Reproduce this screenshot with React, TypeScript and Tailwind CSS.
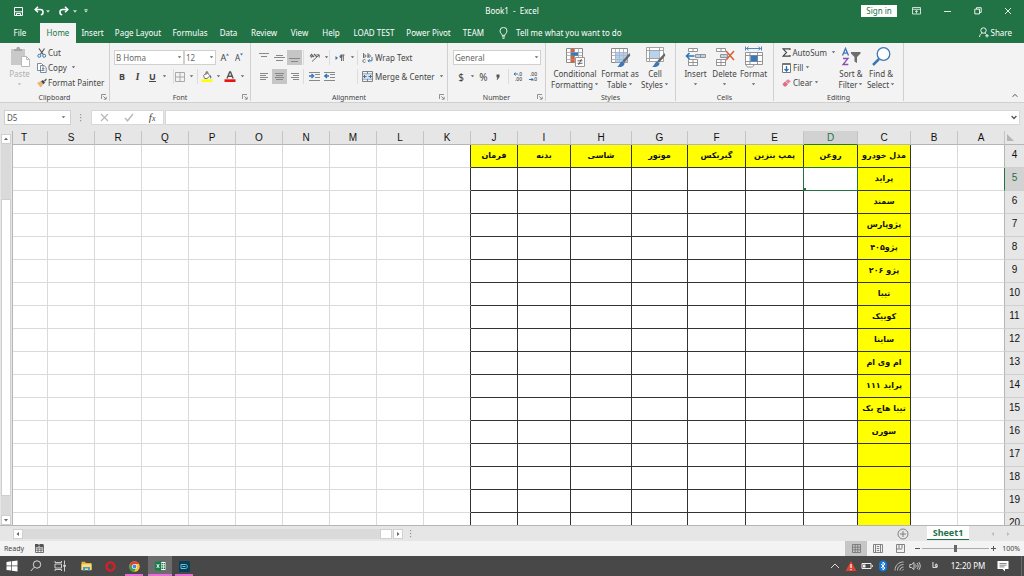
import React, { useState } from "react";

type Kids = { children?: React.ReactNode };

const Caret = () => (
  <svg width="5" height="3" viewBox="0 0 5 3" className="shrink-0">
    <path d="M0.8 0.3h3.400L2.500 2.300z" fill="#666" />
  </svg>
);

const Launcher = () => (
  <svg width="6" height="6" viewBox="0 0 6 6" fill="none" stroke="#777" strokeWidth="0.8">
    <path d="M0.5 5V0.5H5M2.3 2.3l2.6 2.6M5.2 2.8v2.4H2.8" />
  </svg>
);

function Group({ label, width, launcher, children }: Kids & { label: string; width: string; launcher?: boolean }) {
  return (
    <section aria-label={label} className={`flex shrink-0 flex-col border-r border-[#d0d0d0] ${width}`}>
      <div className="flex h-[50px] items-start">{children}</div>
      <div className="flex h-2 items-center">
        <span className="w-[14px]" />
        <span className="flex-1 text-center text-[#444] text-[7px]">{label}</span>
        <span className="flex w-[14px] justify-end pr-[2px]">
          {launcher && (
            <button aria-label={`${label} settings`} className="block">
              <Launcher />
            </button>
          )}
        </span>
      </div>
    </section>
  );
}

function Tool({ label, w, active, children }: Kids & { label: string; w: string; active?: boolean }) {
  return (
    <button
      aria-label={label}
      className={`flex h-[15px] shrink-0 items-center justify-center ${w} ${active ? "bg-[#c6c6c6]" : ""}`}
    >
      {children}
    </button>
  );
}

const Sep = () => <span className="h-[15px] w-px shrink-0 bg-[#dcdcdc]" />;

function BigTool({ lines, w, caretBelow, muted, children }: Kids & { lines: string[]; w: string; caretBelow?: boolean; muted?: boolean }) {
  return (
    <button className={`flex shrink-0 flex-col items-center ${w} ${muted ? "text-[#b0b0b0]" : "text-[#444]"}`}>
      <span className="flex h-[22px] items-center">{children}</span>
      {lines.map((l, i) => (
        <span key={l} className="flex h-[11px] items-center gap-px whitespace-nowrap leading-[11px]">
          {l}
          {!caretBelow && i === lines.length - 1 && <Caret />}
        </span>
      ))}
      {caretBelow && (
        <span className={`flex h-[11px] items-center ${muted ? "opacity-40" : ""}`}>
          <Caret />
        </span>
      )}
    </button>
  );
}

function SmallTool({ text, caret, gap, children }: Kids & { text: string; caret?: boolean; gap?: string }) {
  return (
    <button className="flex h-[15px] items-center">
      <span className="flex w-[11px] justify-start">{children}</span>
      <span className="whitespace-nowrap">{text}</span>
      {caret && (
        <span className={gap ?? "ml-1"}>
          <Caret />
        </span>
      )}
    </button>
  );
}

const Lines = ({ rows }: { rows: [number, number, number][] }) => (
  <svg width="11" height="11" viewBox="0 0 11 11" stroke="#888" strokeWidth="1">
    {rows.map(([y, a, b]) => (
      <path key={y} d={`M${a} ${y}.5H${b}`} />
    ))}
  </svg>
);

const Grid = ({ accent }: { accent?: React.ReactNode }) => (
  <svg width="22" height="22" viewBox="0 0 22 22" fill="none">
    <path d="M2.5 2.5h16v14h-16z" fill="#fff" stroke="#8a8a8a" />
    <path d="M2.5 6.5h16M2.5 9.5h16M2.5 13.5h16M6.5 2.5v14M10.5 2.5v14M14.5 2.5v14" stroke="#a5a5a5" strokeWidth="0.8" />
    {accent}
  </svg>
);

const Brush = () => (
  <>
    <path d="M20.5 7l.8 2.5-6 7-2-1.6z" fill="#666" />
    <path d="M8 21c2-.8 2.5-4.500 5.300-5.800l2.200 2c0 2.800-3 4.300-7.500 3.800z" fill="#3c78b8" />
  </>
);

const Indent = ({ dir }: { dir: "left" | "right" }) => (
  <svg width="11" height="11" viewBox="0 0 11 11" fill="none">
    <path d="M0 1.500h11M6 3.500h5M6 6.500h5M0 9.500h11" stroke="#888" strokeWidth="1" />
    {dir === "right" ? (
      <path d="M0 5h3.500M2.500 3l2.200 2-2.200 2" stroke="#2b74b8" strokeWidth="1.300" />
    ) : (
      <path d="M1.500 5H5M3 3L.8 5 3 7" stroke="#2b74b8" strokeWidth="1.300" />
    )}
  </svg>
);

const Decimals = ({ inc }: { inc?: boolean }) => (
  <svg width="11" height="11" viewBox="0 0 11 11">
    <text x={inc ? 5 : 2} y="4.800" fontSize="5" fontFamily="Open Sans" fontWeight="600" fill="#555">{inc ? ".0" : ".00"}</text>
    <text x={inc ? 2 : 5} y="10" fontSize="5" fontFamily="Open Sans" fontWeight="600" fill="#555">{inc ? ".00" : ".0"}</text>
    <path d={inc ? "M5 3H1M2.500 1.500L1 3l1.500 1.500" : "M1 8.500h4M3.500 7L5 8.500 3.500 10"} stroke="#2b74b8" fill="none" />
  </svg>
);

const tabs: [string, string][] = [
  ["File", "w-10"],
  ["Home", "w-9"],
  ["Insert", "w-[33px]"],
  ["Page Layout", "w-[58px]"],
  ["Formulas", "w-[46px]"],
  ["Data", "w-[31px]"],
  ["Review", "w-10"],
  ["View", "w-[31px]"],
  ["Help", "w-8"],
  ["LOAD TEST", "w-[54px]"],
  ["Power Pivot", "w-[55px]"],
  ["TEAM", "w-[35px]"],
];

function TitleBar() {
  return (
    <header className="grid h-[22px] shrink-0 grid-cols-[1fr_auto_1fr] items-center bg-[#217346] text-white">
      <div className="flex items-center pl-[13px]">
        <button aria-label="Save" className="w-[21px]">
          <svg width="11" height="11" viewBox="0 0 11 11" fill="none" stroke="#fff">
            <path d="M1.500 1.500h8v8h-8zM1.500 5.800h8M3.500 9.500v-2h4v2" />
          </svg>
        </button>
        <button aria-label="Undo" className="flex w-6 items-center gap-px">
          <svg width="11" height="10" viewBox="0 0 11 10" fill="none" stroke="#fff" strokeWidth="1.500">
            <path d="M4 .8L1.200 3.500 4 6.200M1.500 3.500h4.800c3.600 0 3.600 4.800.5 5.300" />
          </svg>
          <svg width="4" height="3" viewBox="0 0 5 3"><path d="M0 0h5L2.500 3z" fill="#c6ddd0" /></svg>
        </button>
        <button aria-label="Redo" className="flex w-[26px] items-center gap-1">
          <svg width="11" height="10" viewBox="0 0 11 10" fill="none" stroke="#fff" strokeWidth="1.500">
            <path d="M7 .8l2.800 2.700L7 6.200M9.500 3.500H4.700c-3.600 0-3.600 4.800-.5 5.300" />
          </svg>
          <svg width="4" height="3" viewBox="0 0 5 3"><path d="M0 0h5L2.500 3z" fill="#c6ddd0" /></svg>
        </button>
        <button aria-label="Customize toolbar">
          <svg width="4" height="4" viewBox="0 0 5 5" fill="#dcebe2"><path d="M.5 0h4v.8h-4zM.3 2h4.400L2.500 4.500z" /></svg>
        </button>
      </div>
      <h1 className="whitespace-pre">{"Book1  -  Excel"}</h1>
      <div className="flex items-center justify-end pr-3">
        <button className="h-3 w-9 bg-white text-center leading-3 text-[#217346]">Sign in</button>
        <button aria-label="Ribbon display options" className="ml-[15px]">
          <svg width="9" height="8" viewBox="0 0 9 8" fill="none" stroke="#dcebe2" strokeWidth="0.900">
            <path d="M.5 .5h8v6.500h-8zM.5 2.300h8M4.500 6.500V3.500M3 4.800l1.500-1.400L6 4.800" />
          </svg>
        </button>
        <button aria-label="Minimize" className="ml-[23px] h-px w-[7px] bg-[#dcebe2]" />
        <button aria-label="Restore" className="ml-[23px]">
          <svg width="8" height="8" viewBox="0 0 8 8" fill="none" stroke="#fff" strokeWidth="0.900">
            <path d="M.8 2.200h4.700v4.700H.8zM2.500 2V.7h4.700v4.700H5.600" />
          </svg>
        </button>
        <button aria-label="Close" className="ml-[22px]">
          <svg width="8" height="8" viewBox="0 0 8 8" stroke="#fff" strokeWidth="0.900"><path d="M1 1l6 6M7 1L1 7" /></svg>
        </button>
      </div>
    </header>
  );
}

function TabBar() {
  return (
    <nav className="flex h-[21px] shrink-0 items-stretch bg-[#217346] text-white">
      {tabs.map(([name, w]) => (
        <button
          key={name}
          className={`mt-px shrink-0 whitespace-nowrap text-center ${w} ${name === "Home" ? "bg-[#f3f3f3] text-[#217346]" : ""}`}
        >
          {name}
        </button>
      ))}
      <button className="ml-2 flex items-center gap-2 whitespace-nowrap">
        <svg width="9" height="12" viewBox="0 0 9 12" fill="none" stroke="#fff" strokeWidth="0.900">
          <path d="M3 8.300C3 6.800 1 6 1 3.900a3.500 3.500 0 017 0C8 6 6 6.800 6 8.300zM3 9.800h3M3.500 11.300h2" />
        </svg>
        Tell me what you want to do
      </button>
      <button className="ml-auto flex items-center gap-[2px] pr-3">
        <svg width="10" height="11" viewBox="0 0 10 11" fill="none" stroke="#fff" strokeWidth="0.900">
          <circle cx="4.500" cy="3.500" r="2.700" />
          <path d="M.5 10c.3-2.200 1.400-3.500 2.800-4M5.800 6l1.500 1.500M8 7v3.500M6.300 8.800h3.500" />
        </svg>
        Share
      </button>
    </nav>
  );
}

function ClipboardGroup() {
  return (
    <Group label="Clipboard" width="w-[110px]" launcher>
      <div className="flex gap-[2px] pl-1 pt-[3px]">
        <BigTool lines={["Paste"]} w="w-[31px]" caretBelow muted>
          <svg width="22" height="22" viewBox="0 0 22 22">
            <path d="M2 3h14v16H2z" fill="#c9c9c9" />
            <path d="M5 5V3h2.300C7.500 0 11 0 11.200 3H13v2z" fill="#a8a8a8" />
            <path d="M12.500 10.500h5l3 3v7h-8z" fill="#fff" stroke="#b8b8b8" />
            <path d="M17.500 10.500v3h3" fill="none" stroke="#b8b8b8" />
          </svg>
        </BigTool>
        <div className="-mt-px flex flex-col">
          <SmallTool text="Cut">
            <svg width="10" height="10" viewBox="0 0 10 10" fill="none">
              <path d="M2 .5l4.200 6M7.500 .5l-4.200 6" stroke="#555" strokeWidth="1.200" />
              <circle cx="2.300" cy="7.800" r="1.500" stroke="#3c78b8" /><circle cx="7.200" cy="7.800" r="1.500" stroke="#3c78b8" />
            </svg>
          </SmallTool>
          <SmallTool text="Copy" caret>
            <svg width="10" height="10" viewBox="0 0 10 10" fill="#fff" stroke="#6d7f95" strokeWidth="0.900">
              <path d="M.5 .5h4L6 2v5.500H.5zM3.500 2.500H7L9.200 4.500v5H3.500zM5 5.500h2.500M5 7.300h2.500" />
            </svg>
          </SmallTool>
          <SmallTool text="Format Painter">
            <svg width="10" height="10" viewBox="0 0 10 10">
              <path d="M0 5l4-2 2.500 3-2.800 3.500z" fill="#eab676" /><path d="M4 3.200L6 2l2 2.500-1.500 1.700z" fill="#444" /><path d="M7 2.500L9 .5l.8.900L8 3.800z" fill="#555" />
            </svg>
          </SmallTool>
        </div>
      </div>
    </Group>
  );
}

function Combo({ value, label, w }: { value: string; label: string; w: string }) {
  return (
    <div className={`grid h-[15px] shrink-0 items-center border border-[#d0d0d0] bg-white ${w}`}>
      <select aria-label={label} className="col-start-1 row-start-1 h-[13px] w-full appearance-none bg-transparent pl-px text-[#666]">
        <option>{value}</option>
      </select>
      <span className="pointer-events-none col-start-1 row-start-1 mr-px justify-self-end"><Caret /></span>
    </div>
  );
}

function FontGroup() {
  return (
    <Group label="Font" width="w-[141px]" launcher>
      <div className="flex flex-col gap-1 pl-1 pt-[7px]">
        <div className="flex">
          <Combo label="Font name" value="B Homa" w="w-[70px]" />
          <Combo label="Font size" value="12" w="w-8" />
          <Tool label="Increase font size" w="w-[18px]">
            <span className="text-[9px]">A</span><svg width="3" height="9" viewBox="0 0 3 9"><path d="M0 2.500L1.500 .5 3 2.500z" fill="#2b74b8" /></svg>
          </Tool>
          <Tool label="Decrease font size" w="w-[10px]">
            <span>A</span><svg width="3" height="9" viewBox="0 0 3 9"><path d="M0 .5h3L1.500 2.500z" fill="#2b74b8" /></svg>
          </Tool>
        </div>
        <div className="flex">
          <Tool label="Bold" w="w-4"><b className="text-[9px]">B</b></Tool>
          <Tool label="Italic" w="w-[15px]"><i className="font-serif text-[10px] font-bold">I</i></Tool>
          <Tool label="Underline" w="w-[15px]"><b className="text-[9px] underline">U</b></Tool>
          <Tool label="Underline options" w="w-2"><Caret /></Tool>
          <span className="w-[5px]" />
          <Sep />
          <Tool label="Borders" w="w-3">
            <svg width="10" height="10" viewBox="0 0 10 10" stroke="#a0a0a0" fill="none"><path d="M.5 .5h9v9h-9zM5 .5v9M.5 5h9" strokeWidth="0.900" /></svg>
          </Tool>
          <Tool label="Border options" w="w-[11px]"><Caret /></Tool>
          <Sep />
          <Tool label="Fill color" w="w-[18px]">
            <svg width="12" height="11" viewBox="0 0 12 11">
              <path d="M2.500 4.500L6 1.500l3 3.300L6 7.500H3.700z" fill="#fff" stroke="#666" strokeWidth="0.900" /><path d="M5 4V.8h1.800v2" fill="none" stroke="#666" strokeWidth="0.800" /><path d="M9.200 4c1.500 1.300 1.500 3.200.6 3.600-1-.2-.8-1.800-.6-3.600z" fill="#2b74b8" />
              <path d="M.5 8.300h11V11H.5z" fill="#ff0" />
            </svg>
          </Tool>
          <Tool label="Fill options" w="w-1"><Caret /></Tool>
          <Tool label="Font color" w="w-5">
            <svg width="12" height="11" viewBox="0 0 12 11">
              <path d="M3 7.500L5.700 1h.8l2.700 6.500M4.200 5.300h3.800" stroke="#555" strokeWidth="1.400" fill="none" /><path d="M.5 8.300h11V11H.5z" fill="#e11" />
            </svg>
          </Tool>
          <Tool label="Font color options" w="w-1"><Caret /></Tool>
        </div>
      </div>
    </Group>
  );
}

function AlignmentGroup() {
  return (
    <Group label="Alignment" width="w-[197px]" launcher>
      <div className="flex flex-col gap-1 pl-[5px] pt-[7px]">
        <div className="flex">
          <Tool label="Top align" w="w-4"><Lines rows={[[1, 0, 10], [4, 2, 8]]} /></Tool>
          <Tool label="Middle align" w="w-[15px]"><Lines rows={[[3, 2, 9], [5, 0, 11], [8, 2, 9]]} /></Tool>
          <Tool label="Bottom align" w="w-[15px]" active><Lines rows={[[6, 0, 11], [9, 2, 9]]} /></Tool>
          <span className="w-px" />
          <Sep />
          <Tool label="Orientation" w="w-[20px]">
            <svg width="11" height="11" viewBox="0 0 11 11" fill="none" stroke="#666">
              <path d="M3 9.500l7-6.500M7.500 2.800l2.700 0v2.700" /><path d="M1 4.500l1.500-2L5 5M2 5.500l2-2M5 2l3 3" strokeWidth="1.200" />
            </svg>
          </Tool>
          <Tool label="Orientation options" w="w-1"><Caret /></Tool>
          <span className="w-px" />
          <Sep />
          <Tool label="Text direction" w="w-5">
            <svg width="10" height="8" viewBox="0 0 10 8"><path d="M.5 2v4L3 4z" fill="#2b74b8" /><path d="M5.500 1h4M6.500 1v6M8.300 1v6" stroke="#666" /><circle cx="6" cy="2.500" r="1.500" fill="#666" /></svg>
          </Tool>
          <Tool label="Direction options" w="w-[5px]"><Caret /></Tool>
          <span className="w-[2px]" />
          <Sep />
          <span className="w-[4px]" />
          <button className="flex h-[15px] items-center gap-[2px] whitespace-nowrap">
            <svg width="11" height="11" viewBox="0 0 11 11" fill="none">
              <path d="M1.500 1v5M1.500 4a1.200 1.200 0 112.400 0 1.200 1.200 0 01-2.400 0M6 1v5M6 4a1.200 1.200 0 112.400 0A1.200 1.200 0 016 4M3.500 8a1.500 1.500 0 100 2" stroke="#666" strokeWidth="0.900" />
              <path d="M10 5v3.800H6M7.500 7.300L6 8.800l1.500 1.500" stroke="#2b74b8" />
            </svg>
            Wrap Text
          </button>
        </div>
        <div className="flex">
          <Tool label="Align left" w="w-4"><Lines rows={[[2, 1, 9], [4, 1, 7], [6, 1, 9], [8, 1, 7]]} /></Tool>
          <Tool label="Center" w="w-[15px]" active><Lines rows={[[2, 1, 10], [4, 2, 9], [6, 1, 10], [8, 2, 9]]} /></Tool>
          <Tool label="Align right" w="w-[15px]"><Lines rows={[[2, 2, 10], [4, 4, 10], [6, 2, 10], [8, 4, 10]]} /></Tool>
          <span className="w-px" />
          <Sep />
          <Tool label="Increase indent" w="w-5"><Indent dir="right" /></Tool>
          <Tool label="Decrease indent" w="w-[11px]"><Indent dir="left" /></Tool>
          <span className="w-[22px]" />
          <Sep />
          <span className="w-[4px]" />
          <button className="flex h-[15px] items-center gap-[2px] whitespace-nowrap">
            <svg width="11" height="11" viewBox="0 0 11 11" fill="none">
              <path d="M.5 .5h10v10H.5zM.5 3h10M.5 8h10M5.500 .5V3M5.500 8v2.500" stroke="#777" strokeWidth="0.900" /><path d="M.9 3.400h9.200v4.200H.9z" fill="#d5e5f5" />
              <path d="M1.500 5.500h3M3 4L1.500 5.500 3 7M9.500 5.500h-3M8 4l1.500 1.500L8 7" stroke="#2b74b8" />
            </svg>
            Merge &amp; Center
            <span className="ml-[2px]"><Caret /></span>
          </button>
        </div>
      </div>
    </Group>
  );
}

function NumberGroup() {
  return (
    <Group label="Number" width="w-[98px]" launcher>
      <div className="flex flex-col gap-1 pl-[5px] pt-[7px]">
        <Combo label="Number format" value="General" w="w-[88px]" />
        <div className="flex">
          <Tool label="Currency" w="w-4"><span className="text-[10px]">$</span></Tool>
          <Tool label="Currency options" w="w-[6px]"><Caret /></Tool>
          <Tool label="Percent" w="w-[17px]"><span className="text-[10px]">%</span></Tool>
          <Tool label="Comma style" w="w-3">
            <svg width="4" height="6" viewBox="0 0 4 6"><path d="M.5 .5h3v2.500L1.500 5.800H.6l.9-2.500h-1z" fill="#555" /></svg>
          </Tool>
          <span className="w-[4px]" />
          <Sep />
          <Tool label="Increase decimal" w="w-[18px]"><Decimals inc /></Tool>
          <Tool label="Decrease decimal" w="w-[13px]"><Decimals /></Tool>
        </div>
      </div>
    </Group>
  );
}

function StylesGroup() {
  return (
    <Group label="Styles" width="w-[130px]">
      <div className="flex pl-1 pt-[3px]">
        <BigTool lines={["Conditional", "Formatting"]} w="w-[50px]">
          <Grid accent={<>
            <path d="M7 3h3.500v3.300H7zM7 13.500h3.500v3H7z" fill="#d9603b" /><path d="M7 6.500h7v3.300H7z" fill="#3c78b8" /><path d="M7 10h3.500v3.200H7z" fill="#d9603b" />
            <path d="M11.500 11.500h9v9h-9z" fill="#fff" stroke="#999" /><path d="M13.500 14.800h5M13.500 17.300h5M17.500 13l-3 6" stroke="#555" strokeWidth="0.900" />
          </>} />
        </BigTool>
        <BigTool lines={["Format as", "Table"]} w="w-10">
          <Grid accent={<><path d="M6.500 6.500h12v10h-12z" fill="#9dbde0" fillOpacity="0.750" /><Brush /></>} />
        </BigTool>
        <BigTool lines={["Cell", "Styles"]} w="w-[30px]">
          <svg width="22" height="22" viewBox="0 0 22 22">
            <path d="M2.500 1.500h17v14h-17zM2.500 4.500h17M2.500 12.500h17M5.500 1.500v14M15.500 1.500v14" fill="#fff" stroke="#999" strokeWidth="0.900" />
            <path d="M6 5h9.500v7H6z" fill="#bcd2ec" />
            <Brush />
          </svg>
        </BigTool>
      </div>
    </Group>
  );
}

function CellsGroup() {
  return (
    <Group label="Cells" width="w-[98px]">
      <div className="flex pl-[5px] pt-[3px]">
        <BigTool lines={["Insert"]} w="w-[29px]" caretBelow>
          <svg width="22" height="22" viewBox="0 0 22 22" fill="#fff" stroke="#8a8a8a" strokeWidth="0.900">
            <path d="M3.500 2.500h9v3h-9zM8 2.500v3M3.500 13.500h9v6h-9zM3.500 16.500h9M8 13.500v6" />
            <path d="M10.500 8.500h10v3h-10zM15.500 8.500v3" fill="#bcd2ec" />
            <path d="M1.500 10h8M4.500 7l-3 3 3 3" fill="none" stroke="#2b74b8" strokeWidth="1.500" />
          </svg>
        </BigTool>
        <BigTool lines={["Delete"]} w="w-[29px]" caretBelow>
          <svg width="22" height="22" viewBox="0 0 22 22" fill="#fff" stroke="#8a8a8a" strokeWidth="0.900">
            <path d="M2.500 2.500h9v3h-9zM7 2.500v3M2.500 13.500h9v6h-9zM2.500 16.500h9M7 13.500v6" />
            <path d="M6.500 8.500h7v3h-7z" fill="#bcd2ec" />
            <path d="M12 5l8 9M20 5l-8 9" fill="none" stroke="#d9603b" strokeWidth="1.600" />
          </svg>
        </BigTool>
        <BigTool lines={["Format"]} w="w-[29px]" caretBelow>
          <svg width="22" height="22" viewBox="0 0 22 22" fill="#fff" stroke="#8a8a8a" strokeWidth="0.900">
            <path d="M2.500 6.500h17v12h-17zM2.500 9.500h17M2.500 15.500h17M7 6.500v12M14.500 6.500v12M2.500 18.500l2 2.500h5l1.500-2" />
            <path d="M7.500 9.500h7v6h-7z" fill="#3c78b8" stroke="none" />
            <path d="M3.500 2.500h14M5.500 .8l-2 1.700 2 1.700M15.500 .8l2 1.700-2 1.700M2.500 .5v4M18.500 .5v4" fill="none" stroke="#3c78b8" />
          </svg>
        </BigTool>
      </div>
    </Group>
  );
}

function EditingGroup() {
  return (
    <Group label="Editing" width="w-[130px]">
      <div className="flex pl-2 pt-[2px]">
        <div className="flex w-[54px] flex-col">
          <SmallTool text="AutoSum" caret>
            <svg width="9" height="9" viewBox="0 0 9 9" fill="none" stroke="#444" strokeWidth="1.200"><path d="M8 2V.8H1l3.500 3.700L1 8.200h7V7" /></svg>
          </SmallTool>
          <SmallTool text="Fill" caret gap="ml-[2px]">
            <svg width="9" height="10" viewBox="0 0 9 10" fill="none"><path d="M.5 .5h8v9h-8z" fill="#fff" stroke="#777" /><path d="M.5 1.500h8" stroke="#777" /><path d="M4.500 3v5M2.500 6l2 2 2-2" stroke="#2b74b8" strokeWidth="1.300" /></svg>
          </SmallTool>
          <SmallTool text="Clear" caret gap="ml-[2px]">
            <svg width="9" height="8" viewBox="0 0 9 8"><path d="M3.500 2.200L6 .3l2.600 2-2.300 2.500z" fill="#ea7f9a" /><path d="M.5 5l2.600-2.500L6 5.200 3.800 7.500H2z" fill="#dd6b88" /></svg>
          </SmallTool>
        </div>
        <div className="flex pt-px">
          <BigTool lines={["Sort &", "Filter"]} w="w-[30px]">
            <svg width="20" height="22" viewBox="0 0 20 22" fill="none">
              <path d="M1.500 9.500L4.500 2.500 7.500 9.500M2.500 7.200h4" stroke="#3c78b8" strokeWidth="1.300" /><path d="M2 12.500h5L2 18.500h5.300" stroke="#8a4fb5" strokeWidth="1.300" />
              <path d="M10 6h9.500v1.500L16 11v6l-2.500-1.500V11L10 7.500z" fill="#6d6d6d" />
            </svg>
          </BigTool>
          <BigTool lines={["Find &", "Select"]} w="w-[30px]">
            <svg width="20" height="22" viewBox="0 0 20 22" fill="none">
              <circle cx="12.500" cy="8" r="6.300" fill="#fff" stroke="#3c78b8" strokeWidth="1.300" /><path d="M8 13l-6 6" stroke="#3c78b8" strokeWidth="2.500" />
            </svg>
          </BigTool>
        </div>
      </div>
    </Group>
  );
}

function FormulaBar() {
  return (
    <div className="flex h-7 shrink-0 items-center bg-[#e6e6e6] pl-1 pr-1">
      <div className="grid h-[15px] w-[67px] items-center border border-[#d0d0d0] bg-white">
        <input aria-label="Name box" defaultValue="D5" className="col-start-1 row-start-1 h-[13px] w-full bg-transparent pl-[2px] text-[#555]" />
        <span className="col-start-1 row-start-1 mr-1 justify-self-end"><Caret /></span>
      </div>
      <svg width="20" height="9" viewBox="0 0 20 9" fill="#999"><path d="M9 1h1.200v1.200H9zM9 4h1.200v1.200H9zM9 7h1.200v1.200H9z" /></svg>
      <div className="flex h-[15px] w-[73px] items-center justify-around border border-[#d8d8d8] bg-white">
        <button aria-label="Cancel"><svg width="9" height="9" viewBox="0 0 9 9" stroke="#b8b8b8" strokeWidth="1.200"><path d="M1 1l7 7M8 1L1 8" /></svg></button>
        <button aria-label="Enter"><svg width="10" height="9" viewBox="0 0 10 9" fill="none" stroke="#b8b8b8" strokeWidth="1.400"><path d="M1 5l2.500 2.800L9 1" /></svg></button>
        <button aria-label="Insert function" className="text-[11px] italic text-[#444] [font-family:'Liberation_Serif',serif]">f<span className="text-[8px]">x</span></button>
      </div>
      <div className="ml-px flex h-[15px] flex-1 items-center border border-[#d8d8d8] bg-white">
        <input aria-label="Formula" className="h-[13px] min-w-0 flex-1 bg-transparent pl-1" />
        <button aria-label="Expand formula bar" className="pr-[2px]"><svg width="6" height="5" viewBox="0 0 6 5" fill="none" stroke="#555" strokeWidth="1.300"><path d="M.6 1L3 3.500 5.400 1" /></svg></button>
      </div>
    </div>
  );
}

const columns: [string, string][] = [
  ["A", "w-[47px]"], ["B", "w-[47px]"], ["C", "w-[53px]"], ["D", "w-[54px]"], ["E", "w-[58px]"], ["F", "w-[58px]"],
  ["G", "w-[56px]"], ["H", "w-[61px]"], ["I", "w-[53px]"], ["J", "w-[47px]"], ["K", "w-[47px]"], ["L", "w-[47px]"],
  ["M", "w-[47px]"], ["N", "w-[47px]"], ["O", "w-[47px]"], ["P", "w-[47px]"], ["Q", "w-[47px]"], ["R", "w-[47px]"],
  ["S", "w-[47px]"], ["T", "w-[47px]"],
];

const headings: Record<string, string> = {
  C: "مدل خودرو", D: "روغن", E: "پمپ بنزین", F: "گیربکس", G: "موتور", H: "شاسی", I: "بدنه", J: "فرمان",
};

const models = ["پراید", "سمند", "پژوپارس", "پژو۴۰۵", "پژو ۲۰۶", "تیبا", "کوییک", "ساینا", "ام وی ام", "پراید ۱۱۱", "تیبا هاچ بک", "سورن"];

const rows = Array.from({ length: 17 }, (_, i) => i + 4);

function Sheet() {
  const [sel] = useState({ col: "D", row: 5 });
  return (
    <table className="w-full min-w-[1023px] table-fixed border-separate border-spacing-0 bg-white">
      <colgroup>
        <col className="w-[19px]" />
        {columns.map(([c, w]) => <col key={c} className={w} />)}
      </colgroup>
      <thead>
        <tr className="h-[14px]">
          <th aria-label="Select all" className="border-b border-[#b5b5b5] bg-[#e6e6e6] p-0">
            <svg width="9" height="9" viewBox="0 0 9 9" className="mr-[9px]"><path d="M1 1v7h7z" fill="#b5b5b5" /></svg>
          </th>
          {columns.map(([c]) => (
            <th
              key={c}
              className={`h-[14px] border-b border-r border-r-[#c4c4c4] p-0 pt-px text-center text-[10px] font-normal leading-3 [font-family:'Liberation_Sans',sans-serif] ${
                c === sel.col ? "border-b-[#217346] bg-[#d2d2d2] text-[#217346]" : "border-b-[#b5b5b5] bg-[#e6e6e6] text-[#111]"
              }`}
            >
              {c}
            </th>
          ))}
        </tr>
      </thead>
      <tbody>
        {rows.map((r) => (
          <tr key={r} className="h-[23px]">
            <th
              className={`h-[23px] border-b border-b-[#cfcfcf] p-0 pb-[2px] text-center text-[10px] font-normal [font-family:'Liberation_Sans',sans-serif] ${
                r === sel.row ? "bg-[#d2d2d2] text-[#217346]" : "bg-[#e6e6e6] text-[#111]"
              }`}
            >
              {r}
            </th>
            {columns.map(([c]) => {
              const framed = c >= "C" && c <= "J";
              const yellow = c === "C" || (r === 4 && framed);
              const right = framed || c === "K" ? "border-r-[#333]" : c === "A" ? (r === sel.row ? "border-r-[#217346]" : "border-r-[#b5b5b5]") : "border-r-[#dadada]";
              const bottom = framed ? "border-b-[#333]" : "border-b-[#dadada]";
              const text = r === 4 ? headings[c] : c === "C" ? models[r - 5] : undefined;
              const selected = c === sel.col && r === sel.row;
              return (
                <td
                  key={c}
                  className={`h-[23px] whitespace-nowrap border-b border-r p-0 pb-[2px] text-center text-[8px] font-bold leading-[11px] text-[#111] [font-family:'DejaVu_Sans',sans-serif] ${right} ${bottom} ${yellow ? "bg-[#ff0]" : ""} ${selected ? "relative z-10" : ""}`}
                >
                  {text}
                  {selected && (
                    <span className="absolute -inset-px border border-[#217346]">
                      <span className="absolute -bottom-px -left-px size-[3px] bg-[#217346]" />
                    </span>
                  )}
                </td>
              );
            })}
          </tr>
        ))}
      </tbody>
    </table>
  );
}

const arrow = { up: "M1 4h4L3 1.500z", down: "M1 2h4L3 4.500z", left: "M4 1v4L1.500 3z", right: "M2 1v4l2.500-2z" };

const ScrollButton = ({ dir }: { dir: keyof typeof arrow }) => (
  <button aria-label={`Scroll ${dir}`} className="flex size-[10px] shrink-0 items-center justify-center border border-[#cfcfcf] bg-white">
    <svg width="6" height="6" viewBox="0 0 6 6"><path d={arrow[dir]} fill="#666" /></svg>
  </button>
);

function SheetTabs() {
  return (
    <div className="flex h-[16px] shrink-0 items-center border-t border-[#b5b5b5] bg-[#e6e6e6]">
      <div className="flex w-[403px] shrink-0 items-center pl-[13px]">
        <ScrollButton dir="left" />
        <div className="flex h-[10px] flex-1 justify-end bg-[#dadada]"><span className="w-3 border border-[#cfcfcf] bg-white" /></div>
        <span className="w-px" />
        <ScrollButton dir="right" />
      </div>
      <svg width="14" height="9" viewBox="0 0 14 9" fill="#999"><path d="M7 1h1.200v1.200H7zM7 4h1.200v1.200H7zM7 7h1.200v1.200H7z" /></svg>
      <button aria-label="New sheet" className="ml-auto">
        <svg width="12" height="12" viewBox="0 0 12 12" fill="none" stroke="#777" strokeWidth="0.900"><circle cx="6" cy="6" r="5" /><path d="M6 3v6M3 6h6" /></svg>
      </button>
      <button className="ml-[18px] h-[14px] w-[42px] self-start border-b border-[#217346] bg-white text-[9px] font-bold leading-3 text-[#217346]">Sheet1</button>
      <div className="flex w-[55px] items-center gap-[9px] pl-[21px]">
        <button aria-label="Previous sheet"><svg width="6" height="6" viewBox="0 0 6 6"><path d={arrow.left} fill="#bbb" /></svg></button>
        <button aria-label="Next sheet"><svg width="6" height="6" viewBox="0 0 6 6"><path d={arrow.right} fill="#bbb" /></svg></button>
      </div>
    </div>
  );
}

function StatusBar() {
  return (
    <footer className="flex h-[15px] shrink-0 items-center bg-[#f3f3f3] pl-1 text-[7px] text-[#444]">
      <span className="w-[31px]">Ready</span>
      <button aria-label="Record macro">
        <svg width="9" height="9" viewBox="0 0 9 9" fill="none"><path d="M.5 1.500h8v7h-8zM.5 4h8M3 4v4.500M6 4v4.500M.5 6.200h8" stroke="#666" strokeWidth="0.900" /><path d="M0 0h3.500v3H0zM4.500 0h4v3h-4z" fill="#555" /></svg>
      </button>
      <button aria-label="Normal view" className="ml-auto flex h-[15px] w-[22px] items-center justify-center bg-[#c6c6c6]">
        <svg width="9" height="9" viewBox="0 0 9 9" fill="none" stroke="#777" strokeWidth="0.900"><path d="M.5 .5h8v8h-8zM3.200 .5v8M5.800 .5v8M.5 3.200h8M.5 5.800h8" /></svg>
      </button>
      <button aria-label="Page layout view" className="flex w-[22px] justify-center">
        <svg width="10" height="9" viewBox="0 0 10 9" fill="none" stroke="#777" strokeWidth="0.900"><path d="M.5 .5h9v8h-9zM2.500 .5v8M7.500 .5v8M3.800 2.500h2.400M3.800 4.500h2.400M3.800 6.500h2.400" /></svg>
      </button>
      <button aria-label="Page break view" className="flex w-[22px] justify-center">
        <svg width="9" height="9" viewBox="0 0 9 9" fill="none" stroke="#777" strokeWidth="0.900"><path d="M.5 .5h8v8h-8zM3 .5v4M6 .5v4M.5 5h5.500" /></svg>
      </button>
      <button aria-label="Zoom out" className="ml-1 h-px w-[5px] bg-[#555]" />
      <input
        type="range"
        aria-label="Zoom"
        defaultValue={50}
        className="ml-[2px] h-2 w-[67px] appearance-none bg-transparent [&::-webkit-slider-runnable-track]:h-px [&::-webkit-slider-runnable-track]:bg-[#aaa] [&::-webkit-slider-thumb]:-mt-[3px] [&::-webkit-slider-thumb]:h-[7px] [&::-webkit-slider-thumb]:w-[3px] [&::-webkit-slider-thumb]:appearance-none [&::-webkit-slider-thumb]:bg-[#666]"
      />
      <button aria-label="Zoom in" className="ml-[2px]"><svg width="5" height="5" viewBox="0 0 5 5" stroke="#555"><path d="M0 2.500h5M2.500 0v5" /></svg></button>
      <button className="w-7 pr-1 text-right">100%</button>
    </footer>
  );
}

function Task({ label, running, active, children }: Kids & { label: string; running?: boolean; active?: boolean }) {
  return (
    <button aria-label={label} className={`flex h-5 w-6 flex-col items-center ${active ? "bg-[#6c6c6c]" : ""}`}>
      <span className="flex h-[18px] items-center pt-[2px]">{children}</span>
      {running && <span className={`h-[2px] bg-[#e36fd6] ${active ? "w-6" : "w-[18px]"}`} />}
    </button>
  );
}

function Taskbar() {
  return (
    <div className="flex h-5 shrink-0 items-center bg-[#484848] text-white">
      <div className="flex">
        <Task label="Start"><svg width="12" height="12" viewBox="0 0 12 12" fill="#fff"><path d="M.5 2l4.700-.7v4.300H.5zM5.900 1.200L11.500.4v5.200H5.900zM.5 6.300h4.700v4.300L.5 10zM5.900 6.300h5.600v5.200l-5.600-.8z" /></svg></Task>
        <Task label="Search"><svg width="12" height="12" viewBox="0 0 12 12" fill="none" stroke="#ddd"><circle cx="7" cy="4.500" r="3.700" /><path d="M4.300 7.200L.8 11" /></svg></Task>
        <Task label="Task view"><svg width="12" height="12" viewBox="0 0 12 12" fill="none" stroke="#ddd" strokeWidth="0.900"><path d="M1 1v1.500h6.500V1M1 11V9.500h6.500V11M1 4h6.500v4H1zM10.500 .5v4M10.500 7v4.500" /><path d="M9.800 5h1.500v1.500H9.800z" fill="#ddd" /></svg></Task>
        <span className="w-[2px]" />
        <Task label="File Explorer"><svg width="11" height="10" viewBox="0 0 11 10"><path d="M.5 .8h3.500l1 1.200h5.500v7H.5z" fill="#e8b33c" /><path d="M.5 3.200h10v6H.5z" fill="#ffdd73" /><path d="M2 6h7v3.500H7V7.500H4v2H2z" fill="#3d9be0" /></svg></Task>
        <Task label="Opera"><svg width="11" height="11" viewBox="0 0 11 11"><ellipse cx="5.500" cy="5.500" rx="3.900" ry="4.100" fill="none" stroke="#d61f26" strokeWidth="2.400" /></svg></Task>
        <Task label="Chrome" running>
          <svg width="11" height="11" viewBox="0 0 11 11"><circle cx="5.500" cy="5.500" r="5.200" fill="#f6c431" /><path d="M.9 3A5.200 5.200 0 0110.200 3H5.500L3.300 6.500z" fill="#e24334" /><path d="M.9 3a5.200 5.200 0 003.900 7.700L7 7.300 3.500 7z" fill="#36a352" /><circle cx="5.500" cy="5.500" r="2.500" fill="#fff" /><circle cx="5.500" cy="5.500" r="1.900" fill="#4688f1" /></svg>
        </Task>
        <span className="w-[2px]" />
        <Task label="Excel" running active>
          <svg width="11" height="10" viewBox="0 0 11 10"><path d="M5 1h5.500v8H5z" fill="#fff" /><path d="M6.500 2h1.500v1.300H6.500zM8.600 2H10v1.300H8.600zM6.500 4.300h1.500v1.300H6.500zM8.600 4.300H10v1.300H8.600zM6.500 6.600h1.500v1.300H6.500zM8.600 6.600H10v1.300H8.600z" fill="#217346" /><path d="M0 1l6.200-1v10L0 9z" fill="#17804a" /><path d="M1.700 3l2.600 4M4.300 3L1.700 7" stroke="#fff" strokeWidth="0.900" /></svg>
        </Task>
        <Task label="Screen recorder" running>
          <svg width="11" height="11" viewBox="0 0 11 11" fill="none"><rect width="11" height="11" rx="1" fill="#073f56" /><path d="M2 3.500h4.500c2.500 0 2.500 4 0 4H2zM3.500 5.500h3" stroke="#7fd0e8" strokeWidth="0.900" /></svg>
        </Task>
      </div>
      <div className="ml-auto flex items-center">
        <div className="flex [&>svg]:mx-[2px]">
          <svg width="12" height="12" viewBox="0 0 12 12" fill="none" stroke="#ddd"><path d="M2 8l4-4 4 4" /></svg>
          <svg width="12" height="12" viewBox="0 0 12 12"><path d="M6 1l5.500 10H.5z" fill="#e2412d" /><path d="M6 4v4M6 9v1.200" stroke="#fff" strokeWidth="1.200" /></svg>
          <svg width="12" height="12" viewBox="0 0 12 12" fill="none" stroke="#eee"><path d="M1 3.500h9v5h-9zM11.300 5v2" /><path d="M2 4.500h2.500v3H2z" fill="#eee" stroke="none" /></svg>
          <svg width="12" height="12" viewBox="0 0 12 12" fill="none"><rect x="2" y=".5" width="8" height="11" rx="4" fill="#1479d6" /><path d="M4 4l4 4-2 2V2l2 2-4 4" stroke="#fff" strokeWidth="0.900" /></svg>
          <svg width="12" height="12" viewBox="0 0 12 12" fill="none" stroke="#ccc" strokeWidth="0.900"><path d="M2 10.500C2 5.500 5.500 2 10.500 2M4.500 10.500c0-3.500 2.500-6 6-6M7 10.500c0-2 1.500-3.500 3.500-3.500M9.200 10.500l1.300-1.300" /></svg>
          <svg width="12" height="12" viewBox="0 0 12 12" fill="none" stroke="#ddd" strokeWidth="0.900"><path d="M.8 4.500h1.700l2.500-2v7l-2.500-2H.8zM6.500 4.500c.8 1 .8 2 0 3M8 3c1.500 2 1.500 4 0 6M9.700 2c2 2.500 2 5.500 0 8" /></svg>
        </div>
        <span lang="fa" dir="rtl" className="w-6 text-center text-[8px] [font-family:'DejaVu_Sans',sans-serif]">فا</span>
        <time className="w-[42px] whitespace-nowrap text-center">12:20 PM</time>
        <button aria-label="Notifications" className="mx-2"><svg width="12" height="12" viewBox="0 0 12 12"><path d="M.5 1h11v8H8v2.500L5.500 9h-5z" fill="#fff" /><path d="M2.500 3.500h7M2.500 5.200h7M2.500 6.900h5" stroke="#555" strokeWidth="0.700" /></svg></button>
        <span className="ml-1 mr-[2px] h-5 w-px bg-[#6a6a6a]" />
      </div>
    </div>
  );
}

export default function App() {
  return (
    <div className="flex h-screen flex-col overflow-hidden text-[8px] leading-none [font-family:'Noto_Sans',sans-serif]">
      <TitleBar />
      <TabBar />
      <div className="flex h-[60px] shrink-0 border-b border-[#d0d0d0] bg-[#f3f3f3] pb-px text-[#444]">
        <ClipboardGroup />
        <FontGroup />
        <AlignmentGroup />
        <NumberGroup />
        <StylesGroup />
        <CellsGroup />
        <EditingGroup />
        <button aria-label="Collapse ribbon" className="ml-auto self-end pb-[3px] pr-[6px]">
          <svg width="6" height="5" viewBox="0 0 6 5" fill="none" stroke="#555"><path d="M.6 3.800L3 1.300l2.400 2.500" /></svg>
        </button>
      </div>
      <FormulaBar />
      <main className="flex min-h-0 flex-1 bg-[#e6e6e6]">
        <div className="flex w-[13px] shrink-0 flex-col items-center border-r border-[#b5b5b5] pt-[3px]">
          <ScrollButton dir="up" />
          <div className="flex w-[10px] flex-1 flex-col bg-[#dadada] pb-[19px] pt-[55px]">
            <span className="flex-1 border border-[#cfcfcf] bg-white" />
          </div>
          <ScrollButton dir="down" />
        </div>
        <div dir="rtl" className="min-w-0 flex-1 overflow-hidden"><Sheet /></div>
      </main>
      <SheetTabs />
      <StatusBar />
      <Taskbar />
    </div>
  );
}
